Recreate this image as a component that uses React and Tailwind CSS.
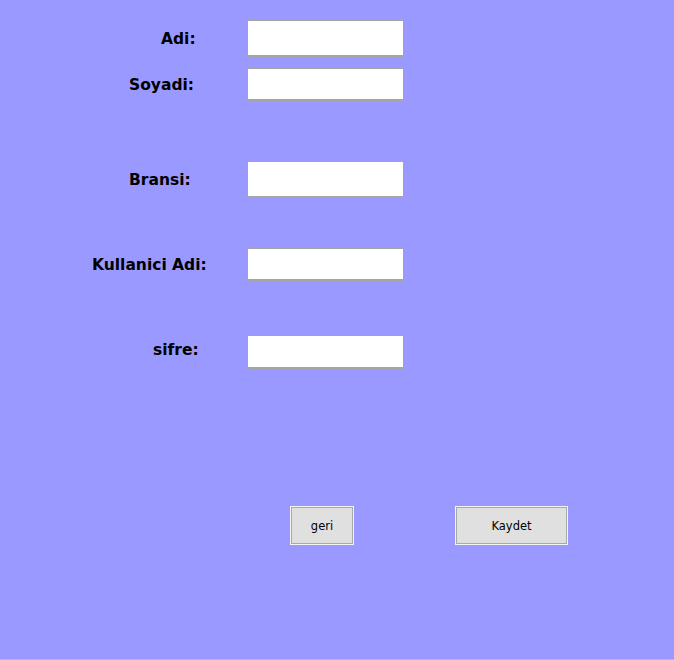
export default function App() {
  const label = "text-[15.5px] font-bold text-black leading-none";
  const input =
    "w-[157px] bg-white border border-[#a5a5a5] border-b-2 outline-none";
  const font = { fontFamily: '"DejaVu Sans", Tahoma, sans-serif' };
  return (
    <div
      className="w-[674px] h-[660px] bg-[#9999ff] flex flex-col relative"
      style={font}
    >
      <div className="flex flex-col pt-[20px]">
        <div className="flex items-center h-[37px]">
          <div className="w-[247px] pl-[161px]">
            <span className={label}>Adi:</span>
          </div>
          <input className={`${input} h-[37px]`} />
        </div>
        <div className="flex items-center h-[33px] mt-[11px]">
          <div className="w-[247px] pl-[129px]">
            <span className={label}>Soyadi:</span>
          </div>
          <input className={`${input} h-[33px]`} />
        </div>
        <div className="flex items-center h-[37px] mt-[60px]">
          <div className="w-[247px] pl-[129px]">
            <span className={label}>Bransi:</span>
          </div>
          <input className={`${input} h-[37px]`} />
        </div>
        <div className="flex items-center h-[33px] mt-[50px]">
          <div className="w-[247px] pl-[92px]">
            <span className={label}>Kullanici Adi:</span>
          </div>
          <input className={`${input} h-[33px]`} />
        </div>
        <div className="flex items-center h-[34px] mt-[54px]">
          <div className="w-[247px] pl-[153px] pb-[5px]">
            <span className={label}>sifre:</span>
          </div>
          <input className={`${input} h-[34px]`} type="password" />
        </div>
        <div className="flex items-center mt-[137px] pl-[290px]">
          <button className="w-[64px] h-[39px] pt-[2px] bg-[#e0e0e0] border border-[#f4f4f4] shadow-[inset_0_0_0_1px_#a8a8a8] text-[11.5px] text-black">
            geri
          </button>
          <button className="ml-[101px] w-[113px] h-[39px] pt-[2px] bg-[#e0e0e0] border border-[#f4f4f4] shadow-[inset_0_0_0_1px_#a8a8a8] text-[11.5px] text-black">
            Kaydet
          </button>
        </div>
      </div>
      <div className="mt-auto h-px w-full bg-[#e8b060]" />
    </div>
  );
}
